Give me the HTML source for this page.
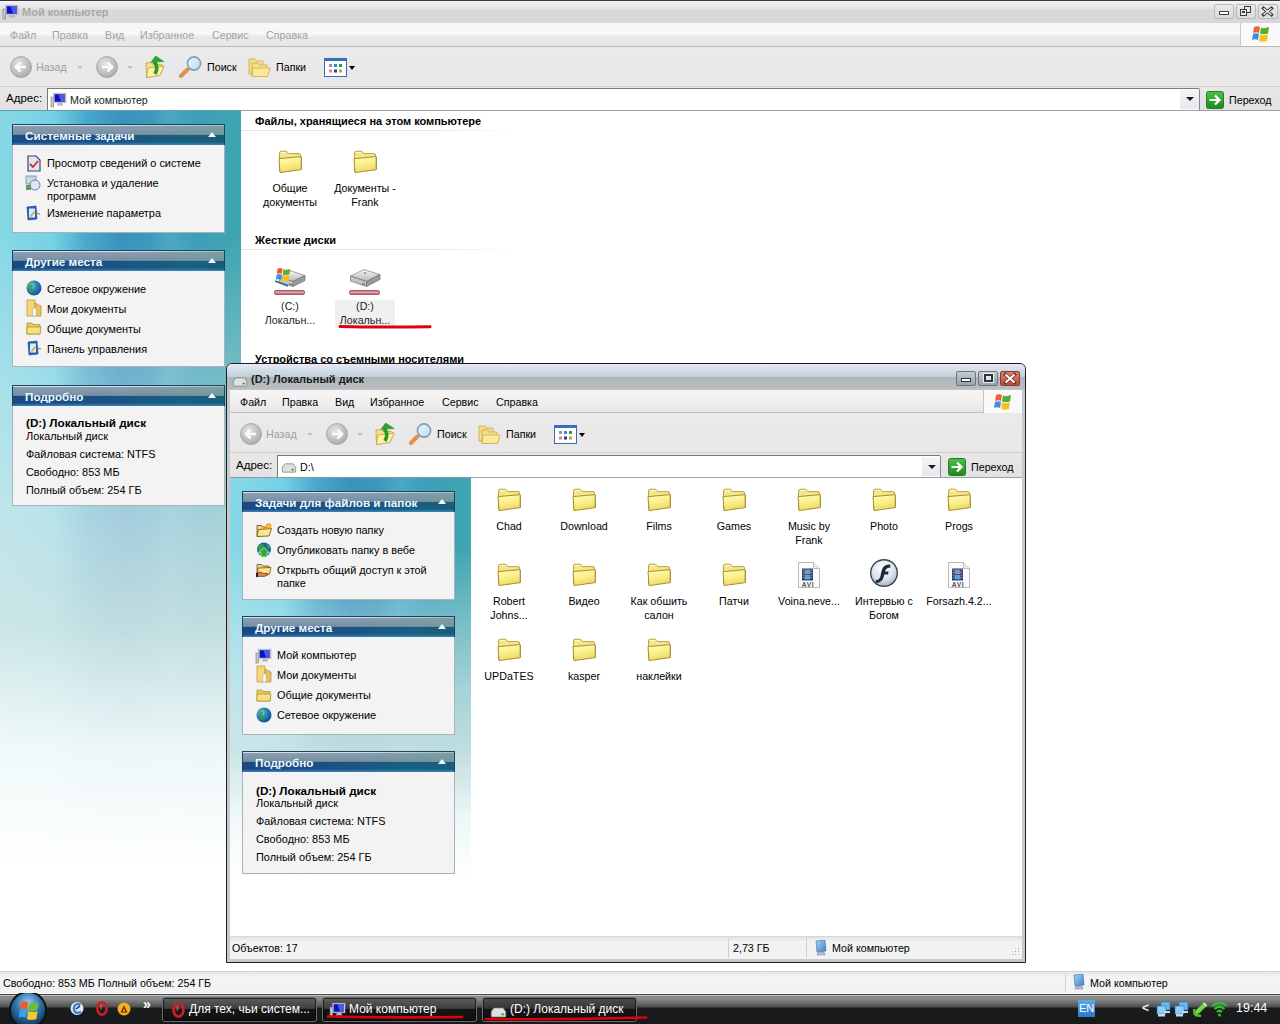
<!DOCTYPE html>
<html><head><meta charset="utf-8">
<style>
*{margin:0;padding:0;box-sizing:border-box}
html,body{width:1280px;height:1024px;overflow:hidden;background:#fff;font-family:"Liberation Sans",sans-serif;font-size:10.7px;color:#000;line-height:1}
.a{position:absolute}
.t{position:absolute;white-space:nowrap;line-height:1}
svg{position:absolute;overflow:visible}
/* main chrome */
#title{left:0;top:0;width:1280px;height:23px;background:linear-gradient(#3a3a3a 0,#3a3a3a 1px,#fbfbfb 1px,#f0f0f0 2px,#e4e4e4 9px,#d9d9d9 10px,#d8d8d8 23px)}
#menu{left:0;top:23px;width:1280px;height:24px;background:linear-gradient(#f7f7f7 0,#f5f5f5 9px,#fafafa 10px,#e9e9e9 14px,#e6e6e6 23px);border-bottom:1px solid #b8b8b8}
#tb{left:0;top:47px;width:1280px;height:40px;background:linear-gradient(#ebeaea,#e9e7e8);border-bottom:1px solid #cdcdcd}
#addr{left:0;top:87px;width:1280px;height:23px;background:linear-gradient(#e9e7e8,#e3e1e2)}
.mi{top:30px;color:#a3a3a3}
#left{left:0;top:110px;width:241px;height:861px;border-top:1px solid #6a9aac;background:linear-gradient(180deg,rgba(255,255,255,0) 0,rgba(255,255,255,0) 15%,rgba(232,242,242,.32) 31%,rgba(222,236,238,.64) 46%,rgba(214,232,230,.86) 60%,rgba(244,250,250,.96) 74%,#fff 88%),linear-gradient(90deg,#88d8e6 0,#74d2e4 22%,#48a8cc 36%,#3a92bc 50%,#3c98bc 62%,#4aa8c4 70%,#3c9eb8 82%,#40a6b0 100%)}
#content{left:241px;top:110px;width:1039px;height:861px;background:#fff;border-top:1px solid #9aa0a4}
.sec{font-weight:bold;font-size:11px;color:#000}
.sep{height:1px;background:linear-gradient(90deg,#e2e6ea,#e6eaee 70%,rgba(255,255,255,0))}
.lbl{text-align:center;color:#000;line-height:14px;white-space:normal}
#status{left:0;top:971px;width:1280px;height:22px;background:linear-gradient(#e7e7e7,#f4f4f4 25%,#f2f2f2);border-top:1px solid #d0d0d0}
#task{left:0;top:993px;width:1280px;height:31px;background:linear-gradient(#fff 0,#fff 1px,#4a4a4a 1px,#4a4a4a 2px,#c0c0c0 2px,#c0c0c0 3px,#8c8e8e 3px,#888a8a 6px,#4c4e4e 14px,#1b1c1e 15px,#17181a 31px)}
/* task panels */
.pnl{position:absolute;background:#f3f3f3;border:1px solid #a9b2b8;border-top:0}
.ph{position:absolute;left:-1px;right:-1px;top:0;height:21px;border:1px solid #1e4260;border-bottom:0;background:linear-gradient(90deg,#1c4882 0,#1c5284 45%,#196080 80%,#1a5c78 100%)}
.ph:before{content:"";position:absolute;left:0;right:0;top:0;height:10px;background:linear-gradient(180deg,#d4e0ea 0,#d4e0ea 1px,#8a9eb0 1px,#7890a6 9px,#5a7a98 10px)}
.ph:after{content:"";position:absolute;left:0;right:0;top:0;height:10px;background:linear-gradient(90deg,rgba(0,0,0,0) 50%,rgba(110,160,150,.5) 100%)}
.phb{position:absolute;left:0;right:0;bottom:0;height:3px;background:linear-gradient(rgba(40,110,170,0),rgba(60,140,200,.9))}
.ph span{position:absolute;left:12px;top:5px;color:#eef8fc;font-weight:bold;font-size:11.7px;z-index:2;white-space:nowrap}
.arr{position:absolute;right:8px;top:7px;width:0;height:0;border-left:4px solid transparent;border-right:4px solid transparent;border-bottom:5px solid #f0f8ff;z-index:2}
.it{position:absolute;left:34px;color:#000;white-space:nowrap;font-size:10.9px}
.tbtn{position:absolute;top:997px;height:25px;border:1px solid #6c6c6c;border-radius:3px;background:linear-gradient(#5e5e5e 0,#3e3e3e 45%,#151515 50%,#111 100%);box-shadow:inset 0 0 0 1px rgba(0,0,0,.6)}
.tbtn.act{background:linear-gradient(#4e4e4e 0,#353535 45%,#141414 50%,#0e0e0e 100%)}
.ttx{top:1003px;color:#fff;font-size:12px}
</style></head><body>
<svg width="0" height="0" style="position:absolute">
<defs>
<linearGradient id="fy" x1="0" y1="0" x2="0.3" y2="1"><stop offset="0" stop-color="#fffac0"/><stop offset=".55" stop-color="#faf08a"/><stop offset="1" stop-color="#eed868"/></linearGradient>
<linearGradient id="fb" x1="0" y1="0" x2="0" y2="1"><stop offset="0" stop-color="#f2dc80"/><stop offset="1" stop-color="#d8b048"/></linearGradient>
<symbol id="folder" viewBox="0 0 26 24"><path d="M2.5 4 Q2.5 2.2 4.2 2.2 L9.5 2.2 L11.8 4.6 L22 4.6 Q23.5 4.6 23.5 6 L23.5 19 L2.5 22 Z" fill="#f6e68a" stroke="#b49a3a" stroke-width=".9"/><path d="M4 3.5 L9 3.5" stroke="#fffbd0" stroke-width="1"/><path d="M2 9.6 L24.2 7.6 L24.2 20.6 L3 23.6 Z" fill="url(#fy)" stroke="#a88e2c" stroke-width="1"/><path d="M24.6 8 L24.6 20.5" stroke="#8a7a3a" stroke-width=".8" opacity=".7"/></symbol>
<linearGradient id="gg" x1="0" y1="0" x2="0" y2="1"><stop offset="0" stop-color="#4cc04c"/><stop offset="1" stop-color="#1a8a1a"/></linearGradient>
<symbol id="go" viewBox="0 0 18 18"><rect x=".5" y=".5" width="17" height="17" rx="2" fill="url(#gg)" stroke="#2a7a2a"/><path d="M3.5 9 H13 M9 4.5 L13.5 9 L9 13.5" stroke="#fff" stroke-width="2.2" fill="none"/></symbol>
<radialGradient id="cg" cx=".4" cy=".35" r=".7"><stop offset="0" stop-color="#e6e6e6"/><stop offset="1" stop-color="#a8a8a8"/></radialGradient>
<symbol id="back" viewBox="0 0 22 22"><circle cx="11" cy="11" r="10.5" fill="url(#cg)" stroke="#a0a0a0" stroke-width=".8"/><path d="M16 11 H6.5 M10.5 6.5 L6 11 L10.5 15.5" stroke="#fafafa" stroke-width="2.6" fill="none"/></symbol>
<symbol id="fwd" viewBox="0 0 22 22"><circle cx="11" cy="11" r="10.5" fill="url(#cg)" stroke="#a0a0a0" stroke-width=".8"/><path d="M6 11 H15.5 M11.5 6.5 L16 11 L11.5 15.5" stroke="#fafafa" stroke-width="2.6" fill="none"/></symbol>
<symbol id="up" viewBox="0 0 20 22"><path d="M1 7 L6 6.5 L7.5 8 L16 8.5 L18.5 10 L15 19 L1.5 21.5 Z" fill="#f4e088" stroke="#c0a040" stroke-width=".8"/><path d="M3 12 L19 10 L15 19.5 L1.5 21.5 Z" fill="#fcf2a8" stroke="#c0a040" stroke-width=".8"/><path d="M9 5.5 Q14 11 10 18" stroke="#2a9a2a" stroke-width="3.6" fill="none"/><path d="M10.6 0 L19 5.5 L6 6.3 Z" fill="#30a830" stroke="#1a7a1a" stroke-width=".5"/></symbol>
<linearGradient id="lens" x1="0" y1="0" x2="1" y2="1"><stop offset="0" stop-color="#e8f8ff"/><stop offset="1" stop-color="#b0e0f4"/></linearGradient>
<symbol id="search" viewBox="0 0 24 22"><path d="M3 20 L9.5 13.5" stroke="#e09048" stroke-width="4" stroke-linecap="round"/><circle cx="16" cy="7.5" r="6.6" fill="url(#lens)" stroke="#8a9cac" stroke-width="1.6"/></symbol>
<symbol id="folders" viewBox="0 0 23 20"><path d="M1 2 L7 2 L8.5 4 L15 4 L15 17 L1 17 Z" fill="#f2dc86" stroke="#c8a440" stroke-width=".7"/><path d="M4 6 L10 6 L11.5 8 L19 8 L19 19 L4 19 Z" fill="#f4de8a" stroke="#c8a440" stroke-width=".7"/><path d="M5 11 L22 11 L19.5 19.5 L4 19.5 Z" fill="#fbe898" stroke="#c8a440" stroke-width=".7"/></symbol>
<symbol id="views" viewBox="0 0 23 19"><rect x=".5" y=".5" width="22" height="18" fill="#fff" stroke="#3a6ab0"/><rect x=".5" y=".5" width="22" height="2.5" fill="#3a70c0"/><rect x="5" y="6" width="3" height="3" fill="#9a88c0"/><rect x="10" y="6" width="3" height="3" fill="#3a88d0"/><rect x="15" y="6" width="3" height="3" fill="#2aa040"/><rect x="5" y="11.5" width="3" height="3" fill="#e08a70"/><rect x="10" y="11.5" width="3" height="3" fill="#1a40a0"/><rect x="15" y="11.5" width="3" height="3" fill="#c8a040"/></symbol>
<symbol id="winflag" viewBox="0 0 20 18"><path d="M3 2 Q6 0.5 9 2 L8 8 Q5 6.5 2 8 Z" fill="#f06030"/><path d="M10 2.5 Q13 4 18 2 L17 8.5 Q13 10 9 8.5 Z" fill="#50b030"/><path d="M2 9 Q5 7.5 8 9 L7 15 Q4 13.5 1 15 Z" fill="#3a90e0"/><path d="M9 9.5 Q13 11 17 9.5 L16 16 Q12 17.5 8 16 Z" fill="#f8c020"/></symbol>
<symbol id="comp" viewBox="0 0 18 16"><rect x="1" y="5" width="2.6" height="10" fill="#c8cac0" stroke="#606860" stroke-width=".5"/><rect x="3.6" y="1.2" width="12.4" height="9.6" fill="#c8d0e0" stroke="#a8b0b8" stroke-width=".6"/><rect x="4.6" y="2.2" width="10.4" height="7.6" fill="#1010c8"/><path d="M8.5 2.2 L15 2.2 L15 9.8 L11 9.8 Z" fill="#6a7ae8" opacity=".7"/><path d="M8 11 L12 11 L13.5 13.5 L6.5 13.5 Z" fill="#b8b8b0"/></symbol>
<symbol id="drive" viewBox="0 0 18 12"><path d="M1 5 L4 1 L14 1 L17 5 L17 10 Q17 11 16 11 L2 11 Q1 11 1 10 Z" fill="#e0e0e0" stroke="#707070" stroke-width=".8"/><rect x="12" y="7" width="3" height="2" fill="#40a040"/></symbol>
<radialGradient id="glb" cx=".35" cy=".35" r=".7"><stop offset="0" stop-color="#a0e0a0"/><stop offset=".4" stop-color="#2a90c0"/><stop offset="1" stop-color="#1a4a90"/></radialGradient>
<symbol id="globe" viewBox="0 0 16 16"><circle cx="8" cy="8" r="7.5" fill="url(#glb)"/><path d="M3 5 Q6 3 7 6 Q5 9 8 11 Q6 14 4 12 Z" fill="#3a9a3a" opacity=".8"/></symbol>
<symbol id="mydocs" viewBox="0 0 16 18"><path d="M1 1 L9 1 L9 17 L1 17 Z" fill="#f4d878" stroke="#b89030" stroke-width=".7"/><path d="M9 4 L15 7 L15 17 L9 17 Z" fill="#e8c060" stroke="#b89030" stroke-width=".7"/><rect x="7" y="9" width="3" height="8" fill="#fff" stroke="#999" stroke-width=".4"/></symbol>
<symbol id="sfold" viewBox="0 0 16 14"><path d="M1 2 L6 2 L7 3.5 L14 3.5 L14 13 L1 13 Z" fill="#e8c860" stroke="#a88a20" stroke-width=".7"/><path d="M1 6 L15 6 L14 13 L1 13 Z" fill="#f8e080" stroke="#a88a20" stroke-width=".7"/></symbol>
<symbol id="ctrl" viewBox="0 0 16 16"><path d="M2 2 L11 1 L12 14 L3 15 Z" fill="#2a60c0" stroke="#1a3a80" stroke-width=".6"/><rect x="4" y="3.5" width="6" height="9" fill="#d8ecf8"/><path d="M5 11 L9 6 L10 7 L6 12 Z" fill="#e0a020"/><path d="M11 8 L15 9" stroke="#808080" stroke-width="1.2"/></symbol>
<symbol id="sysinfo" viewBox="0 0 14 17"><path d="M1 1 L9 1 L13 5 L13 16 L1 16 Z" fill="#dde6f4" stroke="#3a4660" stroke-width="1.2"/><path d="M3 9 L6 12 L11 6" stroke="#e02030" stroke-width="1.8" fill="none"/></symbol>
<symbol id="addrem" viewBox="0 0 16 16"><rect x="1" y="1" width="10" height="8" fill="#c8d8e8" stroke="#6080a0" stroke-width=".7"/><circle cx="10" cy="10" r="5" fill="#dde8f4" stroke="#6070a0" stroke-width=".9"/><rect x="1" y="10" width="5" height="5" fill="#60a060"/></symbol>
<symbol id="newf" viewBox="0 0 16 14"><path d="M1 2.5 L5.5 2.5 L7 4 L12.5 4 L12.5 12 L1 13 Z" fill="#f2d278" stroke="#6a4a18" stroke-width=".8"/><path d="M2.5 6.5 L15.5 5.5 L13 13 L1 13.5 Z" fill="#fbe690" stroke="#6a4a18" stroke-width=".8"/><circle cx="12.5" cy="3" r="2.8" fill="#f89818"/><circle cx="12.5" cy="3" r="1.3" fill="#ffd060"/></symbol>
<radialGradient id="pub" cx=".4" cy=".35" r=".7"><stop offset="0" stop-color="#90e090"/><stop offset="1" stop-color="#106010"/></radialGradient>
<symbol id="publish" viewBox="0 0 16 16"><circle cx="8" cy="7.5" r="7" fill="#2060b0"/><path d="M2 4 Q5 1 8 3 Q6 6 9 8 L4 11 Q1 9 2 4 Z M10 1.5 Q14 3 14.5 7 L11 6 Z" fill="#30a040"/><path d="M2.5 11 L8 5.5 L13.5 11 L11 11 L11 15 L5 15 L5 11 Z" fill="#28b028" stroke="#d8f8d8" stroke-width=".8"/></symbol>
<symbol id="share" viewBox="0 0 16 14"><path d="M1 1.5 L5.5 1.5 L7 3 L13 3 L13 11 L1 11 Z" fill="#f2d278" stroke="#6a5020" stroke-width=".8"/><path d="M2 5 L15 4.5 L13.5 11 L1.5 11 Z" fill="#fbe690" stroke="#6a5020" stroke-width=".8"/><path d="M0.5 10 L4 9 L8 10.5 L11 10 L12 12 L8 13.5 L3 13.5 L0.5 13.5 Z" fill="#e08040" stroke="#5a2a10" stroke-width=".6"/><rect x="0" y="10" width="2" height="4" fill="#202020"/></symbol>
<linearGradient id="hg" x1="0" y1="0" x2="0" y2="1"><stop offset="0" stop-color="#f4f4f4"/><stop offset="1" stop-color="#b8b8b8"/></linearGradient>
<symbol id="hddd" viewBox="0 0 32 22"><path d="M1.5 10 L15 3.5 L31 8.5 L17.5 15.5 Z" fill="url(#hg)" stroke="#808080" stroke-width=".7"/><path d="M1.5 10 L17.5 15.5 L17.5 20.5 L1.5 15 Z" fill="#c4c4c4" stroke="#707070" stroke-width=".7"/><path d="M17.5 15.5 L31 8.5 L31 13.5 L17.5 20.5 Z" fill="#9a9a9a" stroke="#707070" stroke-width=".7"/><path d="M13 17.5 L16 18.5" stroke="#30b030" stroke-width="1.6"/><circle cx="16" cy="7" r="1" fill="#888"/></symbol>
<symbol id="hddc" viewBox="0 0 32 22"><path d="M5 11 L17 5 L31 9.5 L19 15.5 Z" fill="url(#hg)" stroke="#808080" stroke-width=".7"/><path d="M5 11 L19 15.5 L19 20.5 L5 16 Z" fill="#c4c4c4" stroke="#707070" stroke-width=".7"/><path d="M19 15.5 L31 9.5 L31 14.5 L19 20.5 Z" fill="#9a9a9a" stroke="#707070" stroke-width=".7"/><path d="M15 18 L18 19" stroke="#30b030" stroke-width="1.6"/><g transform="translate(1,1) scale(.85)"><path d="M3 2 Q6 0.5 9 2 L8 8 Q5 6.5 2 8 Z" fill="#f05a28"/><path d="M10 2.5 Q13 4 18 2 L17 8.5 Q13 10 9 8.5 Z" fill="#60b030"/><path d="M2 9 Q5 7.5 8 9 L7 15 Q4 13.5 1 15 Z" fill="#3890e0"/><path d="M9 9.5 Q13 11 17 9.5 L16 16 Q12 17.5 8 16 Z" fill="#f8c020"/></g><path d="M1 15 L14 20" stroke="#2a6a8a" stroke-width="1.4"/></symbol>
<symbol id="avi" viewBox="0 0 24 26"><path d="M1.5 .5 L16.5 .5 L22.5 6.5 L22.5 25.5 L1.5 25.5 Z" fill="#fcfcfc" stroke="#a8a8a8" stroke-width=".8"/><path d="M16.5 .5 L16.5 6.5 L22.5 6.5" fill="#e8e8e8" stroke="#b0b0b0" stroke-width=".8"/><rect x="5" y="6.5" width="11" height="12" fill="#2a3a60"/><rect x="7.5" y="7.5" width="6" height="4.6" fill="#8a90c0"/><rect x="7.5" y="12.8" width="6" height="4.6" fill="#5aa0e0"/><g fill="#c8d0e0"><rect x="5.7" y="7.5" width="1" height="1"/><rect x="5.7" y="10" width="1" height="1"/><rect x="5.7" y="12.5" width="1" height="1"/><rect x="5.7" y="15" width="1" height="1"/><rect x="14.3" y="7.5" width="1" height="1"/><rect x="14.3" y="10" width="1" height="1"/><rect x="14.3" y="12.5" width="1" height="1"/><rect x="14.3" y="15" width="1" height="1"/></g><text x="11" y="24.6" font-size="6.6" font-weight="bold" font-family="Liberation Sans" text-anchor="middle" fill="#505050" letter-spacing=".6">AVI</text></symbol>
<radialGradient id="flg" cx=".45" cy=".3" r=".75"><stop offset="0" stop-color="#ffffff"/><stop offset=".6" stop-color="#dde2ea"/><stop offset="1" stop-color="#a8b0bc"/></radialGradient>
<symbol id="flash" viewBox="0 0 30 30"><circle cx="15" cy="15" r="14" fill="#3a4450"/><circle cx="15" cy="15" r="12.6" fill="url(#flg)"/><path d="M21 6.5 Q14 6 12.5 13 L11.5 18 Q10.5 22 6.5 22.5 L7 25 Q13.5 25 15 18 L15.3 16.5 L19 16.5 L19.6 13.6 L16 13.6 Q17 9.5 21.5 9.5 Z" fill="#1a2a40"/></symbol>
<linearGradient id="pcg" x1="0" y1="0" x2="1" y2="1"><stop offset="0" stop-color="#a0d8f8"/><stop offset="1" stop-color="#3a80c8"/></linearGradient>
<symbol id="pc2" viewBox="0 0 12 16"><path d="M1 1 L10 0 L11 11 L2 12 Z" fill="url(#pcg)" stroke="#3a6aa0" stroke-width=".6"/><path d="M3 12 L9 12 L10 15 L2 15 Z" fill="#c0b8d8" stroke="#8080a0" stroke-width=".5"/></symbol>
<radialGradient id="orbg" cx=".5" cy=".3" r=".75"><stop offset="0" stop-color="#9ad0f0"/><stop offset=".5" stop-color="#2a70a8"/><stop offset="1" stop-color="#0a2a48"/></radialGradient>
<symbol id="orb" viewBox="0 0 42 31"><circle cx="21" cy="17" r="19" fill="#111"/><circle cx="21" cy="17" r="17" fill="url(#orbg)"/><g transform="translate(10.5,7) scale(1.18)"><path d="M3 2 Q6 0.5 9 2 L8 8 Q5 6.5 2 8 Z" fill="#f05a28"/><path d="M10 2.5 Q13 4 18 2 L17 8.5 Q13 10 9 8.5 Z" fill="#6ac030"/><path d="M2 9 Q5 7.5 8 9 L7 15 Q4 13.5 1 15 Z" fill="#38a0f0"/><path d="M9 9.5 Q13 11 17 9.5 L16 16 Q12 17.5 8 16 Z" fill="#f8c828"/></g></symbol>
<symbol id="opera" viewBox="0 0 12 15"><ellipse cx="6" cy="7.5" rx="4.6" ry="6.2" fill="none" stroke="#c8202a" stroke-width="2.6"/><ellipse cx="5" cy="6" rx="1" ry="3" fill="#f07070" opacity=".6"/></symbol>
<symbol id="ql1" viewBox="0 0 14 15"><circle cx="7" cy="7.5" r="6.5" fill="#d8ecfc"/><path d="M10.5 4 Q7 2 4.5 5 Q3 8.5 5 11 Q8 13 11 10.5" stroke="#3a7ad0" stroke-width="2.2" fill="none"/><path d="M6 8 L10 5" stroke="#101828" stroke-width="1.2"/></symbol>
<symbol id="ql3" viewBox="0 0 14 14"><circle cx="7" cy="7" r="6.5" fill="#f0b020"/><path d="M3.5 10.5 L7 3.5 L10.5 10.5 Z" fill="#802000"/><path d="M5.5 9.5 L7 6.5 L8.5 9.5 Z" fill="#f0b020"/></symbol>
<symbol id="net" viewBox="0 0 15 16"><rect x="5" y="1" width="9" height="8" fill="#6ab8f0" stroke="#2a70b0" stroke-width=".6"/><rect x="1" y="5" width="9" height="8" fill="#8ad0f8" stroke="#2a70b0" stroke-width=".6"/><rect x="2" y="13" width="7" height="2.5" fill="#d8d0f0"/><rect x="8" y="10" width="6" height="2" fill="#d8d0f0"/></symbol>
<symbol id="pen" viewBox="0 0 15 16"><path d="M2 14 L3 9 L11 1.5 L14 4.5 L6.5 12 Z" fill="#7ad840" stroke="#3a9a20" stroke-width=".6"/><path d="M2 14 L1 8 M2 14 L8 15" stroke="#5ac030" stroke-width="2.5"/><path d="M10.5 2 L13.5 5" stroke="#ddd" stroke-width="2"/></symbol>
<symbol id="wifi" viewBox="0 0 17 16"><path d="M1 5 Q8.5 -1 16 5" stroke="#30c030" stroke-width="2.2" fill="none"/><path d="M3.5 8 Q8.5 3.5 13.5 8" stroke="#30c030" stroke-width="2.2" fill="none"/><path d="M6 11 Q8.5 8.5 11 11" stroke="#30c030" stroke-width="2.2" fill="none"/><circle cx="8.5" cy="14" r="1.6" fill="#30c030"/></symbol>
</defs></svg>

<!-- ============ MAIN WINDOW ============ -->
<div class="a" id="title"></div>
<svg style="left:2px;top:4px" width="18" height="16"><use href="#comp"/></svg>
<div class="t" style="left:22px;top:7px;font-size:11px;font-weight:bold;color:#a8a8a8">Мой компьютер</div>
<!-- title buttons -->
<div class="a" style="left:1214px;top:4px;width:20px;height:15px;border:1px solid #b8b8b8;border-radius:2px;background:linear-gradient(#eaeaea,#dadada)"></div>
<div class="a" style="left:1219px;top:11px;width:10px;height:4px;border:1.5px solid #444;background:#fff"></div>
<div class="a" style="left:1236px;top:4px;width:20px;height:15px;border:1px solid #b8b8b8;border-radius:2px;background:linear-gradient(#eaeaea,#dadada)"></div>
<div class="a" style="left:1244px;top:6px;width:7px;height:7px;border:1.5px solid #3a3a3a;background:#e8e8e8"></div>
<div class="a" style="left:1240px;top:9px;width:7px;height:7px;border:1.5px solid #3a3a3a;background:#e8e8e8"></div>
<div class="a" style="left:1242px;top:11px;width:3px;height:2px;background:#3a3a3a"></div>
<div class="a" style="left:1258px;top:4px;width:20px;height:15px;border:1px solid #b8b8b8;border-radius:2px;background:linear-gradient(#eaeaea,#dadada)"></div>
<svg style="left:1262px;top:7px" width="11" height="9"><path d="M1.5 1.2 L9.5 7.8 M9.5 1.2 L1.5 7.8" stroke="#3a3a3a" stroke-width="3.2" stroke-linecap="square"/><path d="M1.5 1.2 L9.5 7.8 M9.5 1.2 L1.5 7.8" stroke="#f4f4f4" stroke-width="1.3"/></svg>

<div class="a" id="menu"></div>
<div class="t mi" style="left:10px">Файл</div>
<div class="t mi" style="left:52px">Правка</div>
<div class="t mi" style="left:105px">Вид</div>
<div class="t mi" style="left:140px">Избранное</div>
<div class="t mi" style="left:212px">Сервис</div>
<div class="t mi" style="left:266px">Справка</div>
<div class="a" style="left:1240px;top:23px;width:40px;height:23px;background:#fafafa;border-left:1px solid #c8c8c8"></div>
<svg style="left:1251px;top:25px" width="20" height="18"><use href="#winflag"/></svg>

<div class="a" id="tb"></div>
<svg style="left:10px;top:56px" width="22" height="22"><use href="#back"/></svg>
<div class="t" style="left:36px;top:62px;color:#a0a0a0">Назад</div>
<div class="a" style="left:77px;top:66px;border-left:3px solid transparent;border-right:3px solid transparent;border-top:3px solid #c0c0c0"></div>
<svg style="left:96px;top:56px" width="22" height="22"><use href="#fwd"/></svg>
<div class="a" style="left:127px;top:66px;border-left:3px solid transparent;border-right:3px solid transparent;border-top:3px solid #c0c0c0"></div>
<svg style="left:145px;top:56px" width="20" height="22"><use href="#up"/></svg>
<svg style="left:178px;top:56px" width="24" height="22"><use href="#search"/></svg>
<div class="t" style="left:207px;top:62px">Поиск</div>
<svg style="left:248px;top:57px" width="23" height="20"><use href="#folders"/></svg>
<div class="t" style="left:276px;top:62px">Папки</div>
<svg style="left:324px;top:58px" width="23" height="19"><use href="#views"/></svg>
<div class="a" style="left:349px;top:66px;border-left:3px solid transparent;border-right:3px solid transparent;border-top:4px solid #000"></div>

<div class="a" id="addr"></div>
<div class="t" style="left:6px;top:93px;font-size:11.5px">Адрес:</div>
<div class="a" style="left:47px;top:88px;width:1153px;height:22px;background:#fff;border:1px solid #7a7a7a;border-right-color:#8a8a8a;border-bottom:0;border-radius:0 2px 0 0"></div>
<svg style="left:50px;top:92px" width="18" height="16"><use href="#comp"/></svg>
<div class="t" style="left:70px;top:95px;color:#222">Мой компьютер</div>
<div class="a" style="left:1180px;top:90px;width:19px;height:19px;background:linear-gradient(#f4f4f4,#e8e8e8)"></div>
<div class="a" style="left:1186px;top:97px;border-left:4px solid transparent;border-right:4px solid transparent;border-top:4px solid #10183a"></div>
<svg style="left:1206px;top:91px" width="18" height="18"><use href="#go"/></svg>
<div class="t" style="left:1229px;top:95px">Переход</div>

<div class="a" id="left"></div>
<div class="a" id="content"></div>

<!-- left panels main -->
<div class="pnl" style="left:12px;top:124px;width:213px;height:109px">
 <div class="ph"><span>Системные задачи</span><div class="arr"></div><div class="phb"></div></div>
 <svg style="left:14px;top:31px" width="14" height="17"><use href="#sysinfo"/></svg>
 <div class="it" style="top:34px">Просмотр сведений о системе</div>
 <svg style="left:12px;top:51px" width="16" height="16"><use href="#addrem"/></svg>
 <div class="it" style="top:53px;line-height:13px">Установка и удаление<br>программ</div>
 <svg style="left:12px;top:81px" width="16" height="16"><use href="#ctrl"/></svg>
 <div class="it" style="top:84px">Изменение параметра</div>
</div>
<div class="pnl" style="left:12px;top:250px;width:213px;height:117px">
 <div class="ph"><span>Другие места</span><div class="arr"></div><div class="phb"></div></div>
 <svg style="left:13px;top:30px" width="16" height="16"><use href="#globe"/></svg>
 <div class="it" style="top:34px">Сетевое окружение</div>
 <svg style="left:13px;top:49px" width="16" height="18"><use href="#mydocs"/></svg>
 <div class="it" style="top:54px">Мои документы</div>
 <svg style="left:13px;top:71px" width="16" height="14"><use href="#sfold"/></svg>
 <div class="it" style="top:74px">Общие документы</div>
 <svg style="left:13px;top:90px" width="16" height="16"><use href="#ctrl"/></svg>
 <div class="it" style="top:94px">Панель управления</div>
</div>
<div class="pnl" style="left:12px;top:385px;width:213px;height:121px">
 <div class="ph"><span>Подробно</span><div class="arr"></div><div class="phb"></div></div>
 <div class="it" style="left:13px;top:32px;font-weight:bold;font-size:11.7px">(D:) Локальный диск</div>
 <div class="it" style="left:13px;top:46px">Локальный диск</div>
 <div class="it" style="left:13px;top:64px">Файловая система: NTFS</div>
 <div class="it" style="left:13px;top:82px">Свободно: 853 МБ</div>
 <div class="it" style="left:13px;top:100px">Полный объем: 254 ГБ</div>
</div>

<!-- content main -->
<div class="t sec" style="left:255px;top:116px">Файлы, хранящиеся на этом компьютере</div>
<div class="a sep" style="left:241px;top:130px;width:280px"></div>
<svg style="left:277px;top:149px" width="26" height="24"><use href="#folder"/></svg>
<div class="a lbl" style="left:250px;top:181px;width:80px">Общие<br>документы</div>
<svg style="left:352px;top:149px" width="26" height="24"><use href="#folder"/></svg>
<div class="a lbl" style="left:325px;top:181px;width:80px">Документы -<br>Frank</div>
<div class="t sec" style="left:255px;top:235px">Жесткие диски</div>
<div class="a sep" style="left:241px;top:249px;width:280px"></div>
<div class="t sec" style="left:255px;top:354px">Устройства со съемными носителями</div>


<!-- hard disks main -->
<svg style="left:274px;top:266px" width="32" height="22"><use href="#hddc"/></svg>
<div class="a" style="left:274px;top:290px;width:31px;height:5px;border-radius:2px;background:linear-gradient(#c88090,#e0a0a8 50%,#b86070);border:1px solid #a85868"></div>
<div class="a lbl" style="left:250px;top:299px;width:80px;color:#222">(C:)<br>Локальн...</div>
<div class="a" style="left:335px;top:300px;width:60px;height:26px;background:#f0f0f0"></div>
<svg style="left:349px;top:266px" width="32" height="22"><use href="#hddd"/></svg>
<div class="a" style="left:349px;top:290px;width:31px;height:5px;border-radius:2px;background:linear-gradient(#c88090,#e0a0a8 50%,#b86070);border:1px solid #a85868"></div>
<div class="a lbl" style="left:325px;top:299px;width:80px;color:#222">(D:)<br>Локальн...</div>
<svg style="left:338px;top:323px" width="96" height="8"><path d="M2 3.5 Q40 4.5 92 3.8" stroke="#e00010" stroke-width="3" stroke-linecap="round" fill="none"/></svg>

<!-- ============ CHILD WINDOW ============ -->
<div class="a" style="left:226px;top:363px;width:800px;height:600px;border:1px solid #1e1e1e;border-radius:6px 6px 0 0;background:#c6cacd"></div>
<div class="a" id="ctitle" style="left:227px;top:364px;width:798px;height:26px;border-radius:5px 5px 0 0;background:linear-gradient(#e8eaf4 0,#d2dce6 25%,#c0d0dc 48%,#a8b6c0 52%,#b2babe 62%,#b8bcc0 94%,#c8c8c8 100%)"></div>
<svg style="left:232px;top:377px" width="16" height="10"><use href="#drive"/></svg>
<div class="t" style="left:251px;top:374px;font-size:11px;font-weight:bold;color:#1a1a1a">(D:) Локальный диск</div>
<div class="a" style="left:956px;top:371px;width:20px;height:15px;border:1px solid #6e767c;border-radius:2px;background:linear-gradient(#c4ccd4,#98a2aa)"></div>
<div class="a" style="left:961px;top:378px;width:10px;height:4px;border:1.5px solid #333;background:#fff"></div>
<div class="a" style="left:978px;top:371px;width:20px;height:15px;border:1px solid #6e767c;border-radius:2px;background:linear-gradient(#c4ccd4,#98a2aa)"></div>
<div class="a" style="left:984px;top:374px;width:9px;height:8px;border:2px solid #333;background:#dfe6ea;box-shadow:0 0 0 1px #eee"></div>
<div class="a" style="left:1000px;top:371px;width:20px;height:15px;border:1px solid #7a4038;border-radius:2px;background:linear-gradient(#e08070,#c04a38)"></div>
<svg style="left:1004px;top:373px" width="12" height="11"><path d="M1.5 1.5 L10.5 9.5 M10.5 1.5 L1.5 9.5" stroke="#7a3028" stroke-width="3.4" stroke-linecap="square"/><path d="M1.5 1.5 L10.5 9.5 M10.5 1.5 L1.5 9.5" stroke="#fff" stroke-width="2"/></svg>

<div class="a" style="left:230px;top:390px;width:792px;height:23px;background:linear-gradient(#f5f5f5,#f0f0f0 55%,#e6e6e6);border-bottom:1px solid #c0c0c0"></div>
<div class="t" style="left:240px;top:397px">Файл</div>
<div class="t" style="left:282px;top:397px">Правка</div>
<div class="t" style="left:335px;top:397px">Вид</div>
<div class="t" style="left:370px;top:397px">Избранное</div>
<div class="t" style="left:442px;top:397px">Сервис</div>
<div class="t" style="left:496px;top:397px">Справка</div>
<div class="a" style="left:983px;top:390px;width:39px;height:23px;background:#fafafa;border-left:1px solid #c8c8c8"></div>
<svg style="left:993px;top:393px" width="20" height="18"><use href="#winflag"/></svg>

<div class="a" style="left:230px;top:413px;width:792px;height:40px;background:linear-gradient(#ebeaea,#e9e7e8);border-bottom:1px solid #cdcdcd"></div>
<svg style="left:240px;top:423px" width="22" height="22"><use href="#back"/></svg>
<div class="t" style="left:266px;top:429px;color:#a0a0a0">Назад</div>
<div class="a" style="left:307px;top:433px;border-left:3px solid transparent;border-right:3px solid transparent;border-top:3px solid #c0c0c0"></div>
<svg style="left:326px;top:423px" width="22" height="22"><use href="#fwd"/></svg>
<div class="a" style="left:357px;top:433px;border-left:3px solid transparent;border-right:3px solid transparent;border-top:3px solid #c0c0c0"></div>
<svg style="left:375px;top:423px" width="20" height="22"><use href="#up"/></svg>
<svg style="left:408px;top:423px" width="24" height="22"><use href="#search"/></svg>
<div class="t" style="left:437px;top:429px">Поиск</div>
<svg style="left:478px;top:424px" width="23" height="20"><use href="#folders"/></svg>
<div class="t" style="left:506px;top:429px">Папки</div>
<svg style="left:554px;top:425px" width="23" height="19"><use href="#views"/></svg>
<div class="a" style="left:579px;top:433px;border-left:3px solid transparent;border-right:3px solid transparent;border-top:4px solid #000"></div>

<div class="a" style="left:230px;top:453px;width:792px;height:24px;background:linear-gradient(#e9e7e8,#e3e1e2)"></div>
<div class="t" style="left:236px;top:460px;font-size:11.5px">Адрес:</div>
<div class="a" style="left:277px;top:455px;width:664px;height:22px;background:#fff;border:1px solid #7a7a7a;border-right-color:#8a8a8a;border-bottom:0;border-radius:0 2px 0 0"></div>
<svg style="left:281px;top:463px" width="16" height="10"><use href="#drive"/></svg>
<div class="t" style="left:300px;top:462px">D:\</div>
<div class="a" style="left:922px;top:457px;width:18px;height:19px;background:linear-gradient(#f4f4f4,#e8e8e8)"></div>
<div class="a" style="left:928px;top:465px;border-left:4px solid transparent;border-right:4px solid transparent;border-top:4px solid #10183a"></div>
<svg style="left:948px;top:458px" width="18" height="18"><use href="#go"/></svg>
<div class="t" style="left:971px;top:462px">Переход</div>

<div class="a" style="left:230px;top:477px;width:241px;height:459px;border-top:1px solid #8a9aa4;background:linear-gradient(180deg,rgba(255,255,255,0) 0,rgba(255,255,255,0) 15%,rgba(232,242,242,.32) 31%,rgba(222,236,238,.64) 46%,rgba(214,232,230,.86) 60%,rgba(244,250,250,.96) 74%,#fff 88%),linear-gradient(90deg,#88d8e6 0,#74d2e4 22%,#48a8cc 36%,#3a92bc 50%,#3c98bc 62%,#4aa8c4 70%,#3c9eb8 82%,#40a6b0 100%)"></div>
<div class="a" style="left:471px;top:477px;width:551px;height:459px;background:#fff;border-top:1px solid #9aa0a4"></div>

<div class="pnl" style="left:242px;top:491px;width:213px;height:109px">
 <div class="ph"><span>Задачи для файлов и папок</span><div class="arr"></div><div class="phb"></div></div>
 <svg style="left:13px;top:32px" width="16" height="14"><use href="#newf"/></svg>
 <div class="it" style="top:34px">Создать новую папку</div>
 <svg style="left:13px;top:51px" width="16" height="16"><use href="#publish"/></svg>
 <div class="it" style="top:54px">Опубликовать папку в вебе</div>
 <svg style="left:13px;top:72px" width="16" height="14"><use href="#share"/></svg>
 <div class="it" style="top:73px;line-height:13px">Открыть общий доступ к этой<br>папке</div>
</div>
<div class="pnl" style="left:242px;top:616px;width:213px;height:119px">
 <div class="ph"><span>Другие места</span><div class="arr"></div><div class="phb"></div></div>
 <svg style="left:12px;top:32px" width="18" height="16"><use href="#comp"/></svg>
 <div class="it" style="top:34px">Мой компьютер</div>
 <svg style="left:13px;top:49px" width="16" height="18"><use href="#mydocs"/></svg>
 <div class="it" style="top:54px">Мои документы</div>
 <svg style="left:13px;top:72px" width="16" height="14"><use href="#sfold"/></svg>
 <div class="it" style="top:74px">Общие документы</div>
 <svg style="left:13px;top:91px" width="16" height="16"><use href="#globe"/></svg>
 <div class="it" style="top:94px">Сетевое окружение</div>
</div>
<div class="pnl" style="left:242px;top:751px;width:213px;height:123px">
 <div class="ph"><span>Подробно</span><div class="arr"></div><div class="phb"></div></div>
 <div class="it" style="left:13px;top:34px;font-weight:bold;font-size:11.7px">(D:) Локальный диск</div>
 <div class="it" style="left:13px;top:47px">Локальный диск</div>
 <div class="it" style="left:13px;top:65px">Файловая система: NTFS</div>
 <div class="it" style="left:13px;top:83px">Свободно: 853 МБ</div>
 <div class="it" style="left:13px;top:101px">Полный объем: 254 ГБ</div>
</div>
<svg style="left:496px;top:487px" width="26" height="24"><use href="#folder"/></svg>
<div class="a lbl" style="left:469px;top:519px;width:80px">Chad</div>
<svg style="left:571px;top:487px" width="26" height="24"><use href="#folder"/></svg>
<div class="a lbl" style="left:544px;top:519px;width:80px">Download</div>
<svg style="left:646px;top:487px" width="26" height="24"><use href="#folder"/></svg>
<div class="a lbl" style="left:619px;top:519px;width:80px">Films</div>
<svg style="left:721px;top:487px" width="26" height="24"><use href="#folder"/></svg>
<div class="a lbl" style="left:694px;top:519px;width:80px">Games</div>
<svg style="left:796px;top:487px" width="26" height="24"><use href="#folder"/></svg>
<div class="a lbl" style="left:769px;top:519px;width:80px">Music by<br>Frank</div>
<svg style="left:871px;top:487px" width="26" height="24"><use href="#folder"/></svg>
<div class="a lbl" style="left:844px;top:519px;width:80px">Photo</div>
<svg style="left:946px;top:487px" width="26" height="24"><use href="#folder"/></svg>
<div class="a lbl" style="left:919px;top:519px;width:80px">Progs</div>
<svg style="left:496px;top:562px" width="26" height="24"><use href="#folder"/></svg>
<div class="a lbl" style="left:469px;top:594px;width:80px">Robert<br>Johns...</div>
<svg style="left:571px;top:562px" width="26" height="24"><use href="#folder"/></svg>
<div class="a lbl" style="left:544px;top:594px;width:80px">Видео</div>
<svg style="left:646px;top:562px" width="26" height="24"><use href="#folder"/></svg>
<div class="a lbl" style="left:619px;top:594px;width:80px">Как обшить<br>салон</div>
<svg style="left:721px;top:562px" width="26" height="24"><use href="#folder"/></svg>
<div class="a lbl" style="left:694px;top:594px;width:80px">Патчи</div>
<svg style="left:797px;top:562px" width="24" height="26"><use href="#avi"/></svg>
<div class="a lbl" style="left:769px;top:594px;width:80px">Voina.neve...</div>
<svg style="left:869px;top:558px" width="30" height="30"><use href="#flash"/></svg>
<div class="a lbl" style="left:844px;top:594px;width:80px">Интервью с<br>Богом</div>
<svg style="left:947px;top:562px" width="24" height="26"><use href="#avi"/></svg>
<div class="a lbl" style="left:919px;top:594px;width:80px">Forsazh.4.2...</div>
<svg style="left:496px;top:637px" width="26" height="24"><use href="#folder"/></svg>
<div class="a lbl" style="left:469px;top:669px;width:80px">UPDaTES</div>
<svg style="left:571px;top:637px" width="26" height="24"><use href="#folder"/></svg>
<div class="a lbl" style="left:544px;top:669px;width:80px">kasper</div>
<svg style="left:646px;top:637px" width="26" height="24"><use href="#folder"/></svg>
<div class="a lbl" style="left:619px;top:669px;width:80px">наклейки</div>
<div class="a" style="left:230px;top:936px;width:792px;height:23px;background:linear-gradient(#e2e2e2,#f2f2f2 20%,#f2f2f2);border-top:1px solid #d8d8d8"></div>
<div class="t" style="left:232px;top:943px">Объектов: 17</div>
<div class="a" style="left:728px;top:938px;width:1px;height:20px;background:#d0d0d0"></div>
<div class="t" style="left:733px;top:943px">2,73 ГБ</div>
<div class="a" style="left:806px;top:938px;width:1px;height:20px;background:#d0d0d0"></div>
<svg style="left:815px;top:940px" width="12" height="16"><use href="#pc2"/></svg>
<div class="t" style="left:832px;top:943px">Мой компьютер</div>
<div class="a" style="left:1008px;top:944px;width:12px;height:12px;background:radial-gradient(circle,#a8a8a8 0.8px,transparent 1px) 0 0/3px 3px;clip-path:polygon(100% 0,100% 100%,0 100%)"></div>

<div class="a" id="status"></div>
<div class="t" style="left:3px;top:978px">Свободно: 853 МБ Полный объем: 254 ГБ</div>
<div class="a" style="left:1065px;top:973px;width:1px;height:19px;background:#d0d0d0"></div>
<svg style="left:1073px;top:974px" width="12" height="16"><use href="#pc2"/></svg>
<div class="t" style="left:1090px;top:978px">Мой компьютер</div>


<div class="a" id="task"></div>
<svg style="left:7px;top:993px" width="42" height="31"><use href="#orb"/></svg>
<svg style="left:70px;top:1001px" width="14" height="15"><use href="#ql1"/></svg>
<svg style="left:96px;top:1001px" width="12" height="15"><use href="#opera"/></svg>
<svg style="left:117px;top:1002px" width="14" height="14"><use href="#ql3"/></svg>
<div class="t" style="left:143px;top:997px;color:#fff;font-size:14px;font-weight:bold">»</div>
<div class="tbtn" style="left:162px;width:155px"></div>
<svg style="left:172px;top:1002px" width="13" height="16"><use href="#opera"/></svg>
<div class="t ttx" style="left:189px">Для тех, чьи систем...</div>
<div class="tbtn" style="left:322px;width:155px"></div>
<svg style="left:329px;top:1002px" width="18" height="16"><use href="#comp"/></svg>
<div class="t ttx" style="left:349px">Мой компьютер</div>
<div class="tbtn act" style="left:482px;width:155px"></div>
<svg style="left:490px;top:1007px" width="17" height="11"><use href="#drive"/></svg>
<div class="t ttx" style="left:510px">(D:) Локальный диск</div>
<svg style="left:326px;top:1013px" width="140" height="8"><path d="M2 3.5 Q70 5 136 4" stroke="#e00010" stroke-width="2.6" stroke-linecap="round" fill="none"/></svg>
<svg style="left:484px;top:1015px" width="166" height="8"><path d="M2 4 Q80 5 162 2.5" stroke="#e00010" stroke-width="2.6" stroke-linecap="round" fill="none"/></svg>
<div class="a" style="left:1078px;top:1000px;width:17px;height:17px;background:linear-gradient(#5aaae8,#2a7ac8);"></div>
<div class="t" style="left:1079px;top:1003px;color:#fff;font-size:11px">EN</div>
<div class="t" style="left:1142px;top:1002px;color:#eee;font-size:12px;font-weight:bold">&lt;</div>
<svg style="left:1156px;top:1001px" width="15" height="16"><use href="#net"/></svg>
<svg style="left:1174px;top:1001px" width="15" height="16"><use href="#net"/></svg>
<svg style="left:1193px;top:1001px" width="15" height="16"><use href="#pen"/></svg>
<svg style="left:1211px;top:1001px" width="17" height="16"><use href="#wifi"/></svg>
<div class="t" style="left:1236px;top:1002px;color:#fff;font-size:12.5px">19:44</div>

</body></html>
